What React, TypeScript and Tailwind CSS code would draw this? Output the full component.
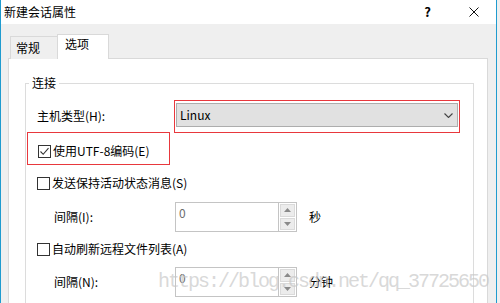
import React from "react"

const font = { fontFamily: '"Noto Sans CJK SC", "Noto Sans", sans-serif' }

function Check({ checked }: { checked?: boolean }) {
    return (
        <div className="w-[13px] h-[13px] border border-[#333333] bg-white flex items-center justify-center shrink-0">
            {checked && (
                <svg width="11" height="11" viewBox="0 0 11 11">
                    <path d="M1.5 5.5 L4.2 8.3 L9.5 2.2" fill="none" stroke="#333333" strokeWidth="1.1" />
                </svg>
            )}
        </div>
    )
}

function Spin({ label, unit }: { label: string; unit: string }) {
    return (
        <div className="flex items-center">
            <div className="w-7 shrink-0" />
            <div className="w-[121px] shrink-0">{label}</div>
            <div className="w-[122px] h-[30px] border border-[#c4c4c4] bg-white flex">
                <span className="flex-1 pl-[3px] pt-[2px] text-[12px] leading-[16px] text-[#6d6d6d]">0</span>
                <div className="w-[18px] flex flex-col border-l border-[#c4c4c4]">
                    <div className="flex-1 m-px border border-[#dadada] bg-[#ececec] flex items-center justify-center">
                        <svg width="7" height="4" viewBox="0 0 7 4"><path d="M0 4 L3.5 0 L7 4 Z" fill="#8a8a8a" /></svg>
                    </div>
                    <div className="flex-1 mx-px mb-px border border-[#dadada] bg-[#ececec] flex items-center justify-center">
                        <svg width="7" height="4" viewBox="0 0 7 4"><path d="M0 0 L3.5 4 L7 0 Z" fill="#8a8a8a" /></svg>
                    </div>
                </div>
            </div>
            <span className="ml-[12px] text-[12px] text-black">{unit}</span>
        </div>
    )
}

export default function App() {
    return (
        <div className="w-[500px] h-[303px] bg-[#efefef] overflow-hidden relative" style={font}>
            <div className="w-[497px] h-full border-l border-r border-[#1f9bcf] bg-[#efefef]">

                {/* title bar */}
                <div className="h-[24px] bg-white flex items-center pl-[3px] pr-[17px] text-[12px] text-black">
                    <span className="flex-1">新建会话属性</span>
                    <span className="text-[13px] font-semibold mr-[38px]">?</span>
                    <svg width="10" height="10" viewBox="0 0 10 10">
                        <path d="M0.5 0.5 L9.5 9.5 M9.5 0.5 L0.5 9.5" stroke="#111111" strokeWidth="1" />
                    </svg>
                </div>

                {/* tabs */}
                <div className="pl-[9px] pt-[10px] flex items-end relative z-10 text-[12px] text-black">
                    <div className="w-[47px] h-[23px] border border-r-0 border-b-0 border-[#d9d9d9] bg-[#efefef] pl-[5px] pt-[3px] leading-[16px]">常规</div>
                    <div className="w-[52px] h-[25px] border border-b-0 border-[#d9d9d9] bg-white pl-[7px] pt-[1px] leading-[16px]">选项</div>
                </div>

                {/* tab panel */}
                <div className="ml-[7px] w-[480px] h-[260px] -mt-px border border-[#d9d9d9] bg-white pl-[16px] pr-[13px] pt-[24px]">
                    <div className="relative h-[240px] border border-[#dcdcdc] text-[12px] text-black">
                        <span className="absolute -top-[9px] left-[3px] px-[3px] bg-white leading-[16px]">连接</span>

                        <div className="mt-[16px] h-[32px] flex items-start">
                            <div className="w-[148px] shrink-0 flex">
                                <span className="ml-[11px] leading-[32px]">主机类型(H):</span>
                            </div>
                            <div className="w-[286px] h-[33px] border border-[#e8383d] pt-[2px] pl-px">
                                <div className="w-[282px] h-[24px] border border-[#adadad] bg-[#e1e1e1] flex items-center pl-[3px] pr-[4px]">
                                    <span className="flex-1">Linux</span>
                                    <svg width="9" height="5" viewBox="0 0 9 5">
                                        <path d="M0.5 0.5 L4.5 4.5 L8.5 0.5" fill="none" stroke="#444444" strokeWidth="1.1" />
                                    </svg>
                                </div>
                            </div>
                        </div>

                        <div className="ml-px w-[143px] h-[33px] border border-[#e8383d] flex items-center gap-[2px] pl-[10px] pt-[5px]">
                            <Check checked />
                            <span>使用UTF-8编码(E)</span>
                        </div>

                        <div className="mt-[5px] h-[26px] flex items-center gap-[2px] pl-[11px]">
                            <Check />
                            <span>发送保持活动状态消息(S)</span>
                        </div>

                        <div className="mt-[6px]">
                            <Spin label="间隔(I):" unit="秒" />
                        </div>

                        <div className="mt-[4px] h-[26px] flex items-center gap-[2px] pl-[11px]">
                            <Check />
                            <span>自动刷新远程文件列表(A)</span>
                        </div>

                        <div className="mt-[5px]">
                            <Spin label="间隔(N):" unit="分钟" />
                        </div>
                    </div>
                </div>
            </div>

            {/* watermark */}
            <span className="absolute left-[158px] top-[270px] text-[20px] leading-[24px] tracking-[-2px] text-[#c8c8c8]/70 whitespace-nowrap pointer-events-none" style={{ fontFamily: '"Liberation Mono", monospace' }}>
                https://blog.csdn.net/qq_37725650
            </span>
        </div>
    )
}
